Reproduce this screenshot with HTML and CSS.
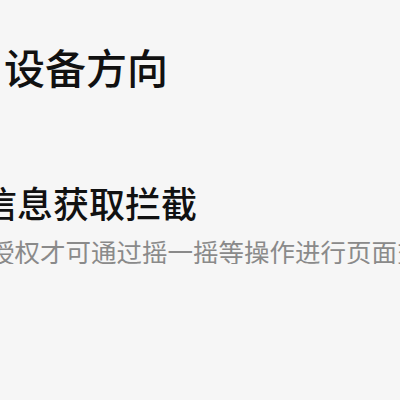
FILE: index.html
```html
<!DOCTYPE html>
<html>

<head>
  <meta charset="utf-8">
  <title>设备方向</title>
  <link rel="stylesheet" href="styles.css">
</head>

<body>
  <div id="settings-page">
    <h1 class="page-title">设备方向</h1>
    <div class="setting-item">
      <div class="setting-name">信息获取拦截</div>
      <div class="setting-desc">授权才可通过摇一摇等操作进行页面交互</div>
    </div>
  </div>
</body>

</html>
```

FILE: styles.css
```css
body {
  font-family: "Noto Sans CJK SC", "Noto Sans", sans-serif;
  margin: 0;
  padding: 0;
  background-color: #f6f6f6;
  overflow: hidden;
}

#settings-page {
  padding-top: 46px;
  white-space: nowrap;
}

.page-title {
  margin: 0 0 0 4px;
  font-size: 41px;
  line-height: 1;
  font-weight: 500;
  color: #111111;
}

.setting-item {
  margin-top: 97px;
  margin-left: -19px;
}

.setting-name {
  font-size: 36px;
  line-height: 1;
  font-weight: 500;
  color: #111111;
}

.setting-desc {
  margin-top: 18px;
  margin-left: 8px;
  font-size: 25.5px;
  line-height: 1;
  color: #8a8a8a;
}
```
